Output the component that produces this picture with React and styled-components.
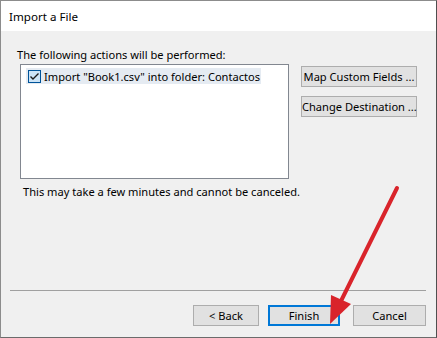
import React from 'react';
import styled, { createGlobalStyle } from 'styled-components';

const Global = createGlobalStyle`
  html, body { margin: 0; padding: 0; background: #ffffff; }
  * { box-sizing: border-box; }
`;

const Window = styled.div`
  position: relative;
  width: 437px;
  height: 338px;
  display: flex;
  flex-direction: column;
  background: #f0f0f0;
  border: 1px solid #8c8c8c;
  border-right-color: #4f4f4f;
  border-bottom-color: #6b6b6b;
  font-family: "Noto Sans", "Open Sans", sans-serif;
  font-size: 11.1px;
  color: #000;
`;

const TitleBar = styled.div`
  height: 30px;
  display: flex;
  align-items: center;
  padding-left: 8px;
  background: #ffffff;
  font-size: 11.6px;
`;

const Body = styled.div`
  flex: 1;
  display: flex;
  flex-direction: column;
`;

const Label = styled.div`
  margin: 16px 0 0 16px;
  line-height: 16px;
`;

const Row = styled.div`
  display: flex;
  margin: 1px 0 0 19px;
`;

const ListBox = styled.div`
  width: 269px;
  height: 115px;
  background: #ffffff;
  border: 1px solid #828790;
  padding: 3px 0 0 5px;
`;

const Item = styled.div`
  display: flex;
  align-items: center;
  gap: 3px;
  width: 235px;
  height: 16px;
  padding-left: 2px;
  background: #e5ebf2;
  white-space: nowrap;
  svg { flex-shrink: 0; }
`;

const SideButtons = styled.div`
  display: flex;
  flex-direction: column;
  gap: 9px;
  margin: 2px 0 0 12px;
`;

const Button = styled.button`
  width: ${p => p.$w || 116}px;
  height: 21px;
  padding: 0;
  font: inherit;
  color: #000;
  background: #e1e1e1;
  border: ${p => (p.$primary ? '2px solid #0078d7' : '1px solid #adadad')};
  white-space: nowrap;
`;

const Note = styled.div`
  margin: 5px 0 0 22px;
  line-height: 16px;
`;

const Separator = styled.div`
  margin: auto 10px 0 9px;
  height: 1px;
  background: #a0a0a0;
`;

const Footer = styled.div`
  display: flex;
  justify-content: flex-end;
  align-items: center;
  gap: 9px;
  padding: 14px 10px 11px 0;
`;

const Overlay = styled.svg`
  position: absolute;
  left: -1px;
  top: -1px;
  pointer-events: none;
`;

function CheckBox() {
  return (
    <svg width="13" height="13" viewBox="0 0 13 13">
      <rect x="0.5" y="0.5" width="12" height="12" fill="#cce4f7" stroke="#005499" />
      <path d="M2.5 6.5 L5 9 L10.5 3.5" fill="none" stroke="#1a1a1a" strokeWidth="1.4" />
    </svg>
  );
}

export default function App() {
  return (
    <>
      <Global />
      <Window>
        <TitleBar>Import a File</TitleBar>
        <Body>
          <Label>The following actions will be performed:</Label>
          <Row>
            <ListBox>
              <Item>
                <CheckBox />
                <span>Import "Book1.csv" into folder: Contactos</span>
              </Item>
            </ListBox>
            <SideButtons>
              <Button>Map Custom Fields ...</Button>
              <Button>Change Destination ...</Button>
            </SideButtons>
          </Row>
          <Note>This may take a few minutes and cannot be canceled.</Note>
          <Separator />
          <Footer>
            <Button $w={66}>&lt; Back</Button>
            <Button $w={72} $primary>Finish</Button>
            <Button $w={73} style={{ marginLeft: 4 }}>Cancel</Button>
          </Footer>
        </Body>
        <Overlay width="437" height="338" viewBox="0 0 437 338">
          <line x1="397" y1="188" x2="339" y2="305" stroke="#d9242b" strokeWidth="4" strokeLinecap="round" />
          <polygon points="330,324 331,295 351,304" fill="#d9242b" />
        </Overlay>
      </Window>
    </>
  );
}
